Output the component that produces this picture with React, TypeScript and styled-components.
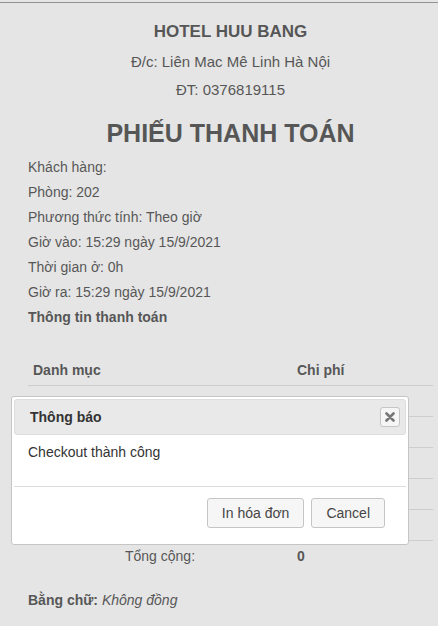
import styled, { createGlobalStyle } from 'styled-components';

const GlobalStyle = createGlobalStyle`
  html, body {
    margin: 0;
    padding: 0;
    overflow: hidden;
    background: #fff;
  }
  body {
    font-family: 'Liberation Sans', Arial, sans-serif;
    color: #333;
  }
`;

const rows = [
  { name: 'Tiền phòng', cost: '0' },
  { name: 'Dịch vụ', cost: '0' },
  { name: 'Phụ thu', cost: '0' },
  { name: 'Giảm giá', cost: '0' },
  { name: 'Trả trước', cost: '0' },
];

const info = [
  'Khách hàng:',
  'Phòng: 202',
  'Phương thức tính: Theo giờ',
  'Giờ vào: 15:29 ngày 15/9/2021',
  'Thời gian ở: 0h',
  'Giờ ra: 15:29 ngày 15/9/2021',
];

const App = () => {
  return (
    <>
      <GlobalStyle />
      <Page>
        <Header>
          <HotelName>HOTEL HUU BANG</HotelName>
          <HeaderLine $gap={10}>Đ/c: Liên Mac Mê Linh Hà Nội</HeaderLine>
          <HeaderLine $gap={8}>ĐT: 0376819115</HeaderLine>
          <Title>PHIẾU THANH TOÁN</Title>
        </Header>
        <InfoList>
          {info.map((line) => (
            <InfoLine key={line}>{line}</InfoLine>
          ))}
          <InfoLine $bold>Thông tin thanh toán</InfoLine>
        </InfoList>
        <Table>
          <thead>
            <tr>
              <HeadCell $first>Danh mục</HeadCell>
              <HeadCell>Chi phí</HeadCell>
            </tr>
          </thead>
          <tbody>
            {rows.map((r) => (
              <tr key={r.name}>
                <Cell>{r.name}</Cell>
                <Cell>{r.cost}</Cell>
              </tr>
            ))}
            <tr>
              <TotalLabel>Tổng cộng:</TotalLabel>
              <TotalValue>0</TotalValue>
            </tr>
          </tbody>
        </Table>
        <Words>
          <b>Bằng chữ:</b> <i>Không đồng</i>
        </Words>
        <Footer>CẢM ƠN QUÝ KHÁCH</Footer>
      </Page>

      <Overlay />
      <Dialog>
        <TitleBar>
          <DialogTitle>Thông báo</DialogTitle>
          <CloseButton aria-label="close">
            <svg width="10" height="10" viewBox="0 0 10 10">
              <path d="M1.5 1.5 L8.5 8.5 M8.5 1.5 L1.5 8.5" stroke="#777" strokeWidth="2.6" strokeLinecap="round" />
            </svg>
          </CloseButton>
        </TitleBar>
        <DialogBody>Checkout thành công</DialogBody>
        <ButtonPane>
          <PaneButton>In hóa đơn</PaneButton>
          <PaneButton>Cancel</PaneButton>
        </ButtonPane>
      </Dialog>
    </>
  );
};

export default App;

const Page = styled.div`
  margin-top: 2px;
  border-top: 1px solid #8a8a8a;
  padding: 19px 5px 0 28px;
`;

const Header = styled.div`
  display: flex;
  flex-direction: column;
  align-items: center;
  text-align: center;
`;

const HotelName = styled.div`
  font-size: 17px;
  font-weight: bold;
  line-height: 20px;
`;

const HeaderLine = styled.div<{ $gap: number }>`
  font-size: 15px;
  line-height: 20px;
  margin-top: ${({ $gap }) => $gap}px;
`;

const Title = styled.h1`
  margin: 18px 0 0;
  font-size: 25px;
  line-height: 30px;
  font-weight: bold;
`;

const InfoList = styled.div`
  margin-top: 7px;
  display: flex;
  flex-direction: column;
`;

const InfoLine = styled.div<{ $bold?: boolean }>`
  font-size: 14px;
  line-height: 25px;
  font-weight: ${({ $bold }) => ($bold ? 'bold' : 'normal')};
`;

const Table = styled.table`
  margin-top: 25px;
  width: 405px;
  border-collapse: collapse;
  font-size: 14px;
`;

const HeadCell = styled.th<{ $first?: boolean }>`
  text-align: left;
  font-weight: bold;
  height: 30px;
  padding: 0 5px;
  width: ${({ $first }) => ($first ? '254px' : 'auto')};
  border-bottom: 1px solid #ddd;
`;

const Cell = styled.td`
  height: 31px;
  box-sizing: border-box;
  padding: 10px 5px 0;
  vertical-align: top;
  line-height: 16px;
  border-bottom: 1px solid #ddd;
`;

const TotalLabel = styled.td`
  height: 30px;
  padding: 0 5px;
  text-align: center;
`;

const TotalValue = styled.td`
  height: 30px;
  padding: 0 5px;
  font-weight: bold;
`;

const Words = styled.div`
  margin-top: 17px;
  font-size: 14px;
  line-height: 24px;
`;

const Footer = styled.div`
  margin-top: 13px;
  text-align: center;
  font-size: 15px;
  font-weight: bold;
  line-height: 20px;
`;

const Overlay = styled.div`
  position: fixed;
  inset: 0;
  background: rgba(170, 170, 170, 0.3);
`;

const Dialog = styled.div`
  position: fixed;
  left: 11px;
  top: 396px;
  width: 392px;
  padding: 2px;
  background: #fff;
  border: 1px solid #c5c5c5;
  border-radius: 3px;
  font-size: 14px;
  color: #333;
`;

const TitleBar = styled.div`
  display: flex;
  align-items: center;
  justify-content: space-between;
  height: 34px;
  padding: 0 5px 0 15px;
  background: #e9e9e9;
  border: 1px solid #dddddd;
  border-radius: 3px;
`;

const DialogTitle = styled.span`
  font-weight: bold;
  font-size: 14px;
`;

const CloseButton = styled.button`
  width: 20px;
  height: 20px;
  padding: 0;
  display: flex;
  align-items: center;
  justify-content: center;
  background: #f6f6f6;
  border: 1px solid #c5c5c5;
  border-radius: 3px;
`;

const DialogBody = styled.div`
  height: 51px;
  padding: 8px 15px 0 14px;
  box-sizing: border-box;
  line-height: 18px;
`;

const ButtonPane = styled.div`
  display: flex;
  justify-content: flex-end;
  gap: 7px;
  padding: 11px 21px 14px 0;
  border-top: 1px solid #dddddd;
`;

const PaneButton = styled.button`
  height: 30px;
  padding: 0 14px;
  font-family: 'Liberation Sans', Arial, sans-serif;
  font-size: 14px;
  color: #454545;
  background: #f6f6f6;
  border: 1px solid #c5c5c5;
  border-radius: 3px;
`;
